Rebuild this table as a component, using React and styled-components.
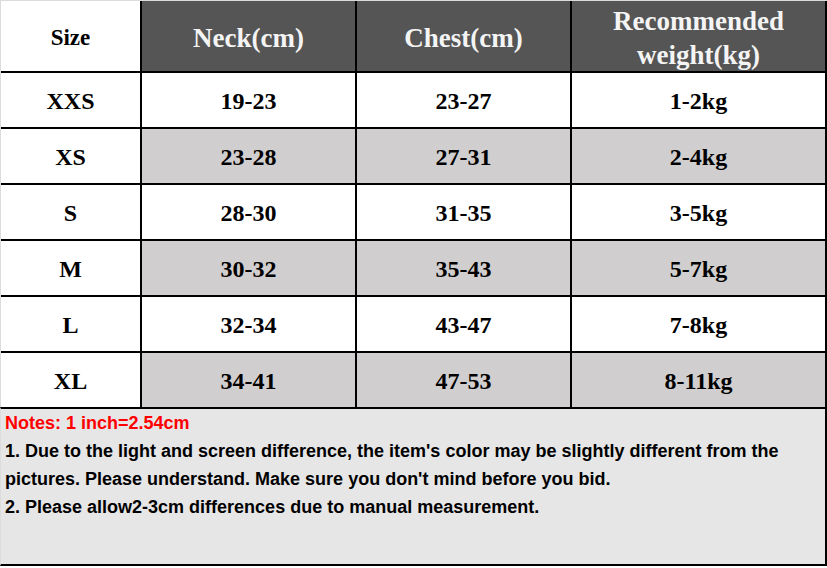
import React from "react";
import styled, { createGlobalStyle } from "styled-components";

const rows = [
  ["XXS", "19-23", "23-27", "1-2kg"],
  ["XS", "23-28", "27-31", "2-4kg"],
  ["S", "28-30", "31-35", "3-5kg"],
  ["M", "30-32", "35-43", "5-7kg"],
  ["L", "32-34", "43-47", "7-8kg"],
  ["XL", "34-41", "47-53", "8-11kg"],
];

const Global = createGlobalStyle`
  body {
    margin: 0;
    background: #fff;
  }
`;

const Sheet = styled.div`
  width: 827px;
  height: 568px;
  border-top: 1px solid #dcdcdc;
  box-sizing: border-box;
`;

const Grid = styled.div`
  display: grid;
  grid-template-columns: 139px 213px 213px 253px;
  grid-template-rows: 70px repeat(6, 54px);
  gap: 2px;
  background: #000;
  border-left: 1px solid #dcdcdc;
  padding-right: 2px;
  width: 827px;
  box-sizing: border-box;
`;

const Cell = styled.div`
  display: flex;
  align-items: center;
  justify-content: center;
  text-align: center;
  padding-top: 3px;
  box-sizing: border-box;
  font-family: "Liberation Serif", "Times New Roman", serif;
  font-weight: bold;
  font-size: 24px;
  color: #000;
  background: ${(p) => (p.$shade ? "#d0cece" : "#fff")};
`;

const Head = styled(Cell)`
  font-size: ${(p) => (p.$small ? "23px" : "27px")};
  line-height: 34px;
  color: ${(p) => (p.$dark ? "#f4f4f4" : "#000")};
  background: ${(p) => (p.$dark ? "#555555" : "#fff")};
`;

const Notes = styled.div`
  height: 159px;
  box-sizing: border-box;
  border-top: 2px solid #000;
  border-right: 2px solid #000;
  border-bottom: 2px solid #000;
  border-left: 1px solid #dcdcdc;
  background: #e7e6e6;
  padding: 0 0 0 4px;
  font-family: "Liberation Sans", Arial, sans-serif;
  font-weight: bold;
  font-size: 18px;
  line-height: 28px;
  color: #000;
`;

const Red = styled.div`
  color: #ff0000;
`;

export default function App() {
  return (
    <Sheet>
      <Global />
      <Grid>
        <Head $small>Size</Head>
        <Head $dark>Neck(cm)</Head>
        <Head $dark>Chest(cm)</Head>
        <Head $dark>
          Recommended
          <br />
          weight(kg)
        </Head>
        {rows.map((r, i) =>
          r.map((v, j) => (
            <Cell key={i + "-" + j} $shade={i % 2 === 1 && j > 0}>
              {v}
            </Cell>
          ))
        )}
      </Grid>
      <Notes>
        <Red>Notes: 1 inch=2.54cm</Red>
        <div>
          1. Due to the light and screen difference, the item's color may be
          slightly different from the pictures. Please understand. Make sure
          you don't mind before you bid.
        </div>
        <div>2. Please allow2-3cm differences due to manual measurement.</div>
      </Notes>
    </Sheet>
  );
}
